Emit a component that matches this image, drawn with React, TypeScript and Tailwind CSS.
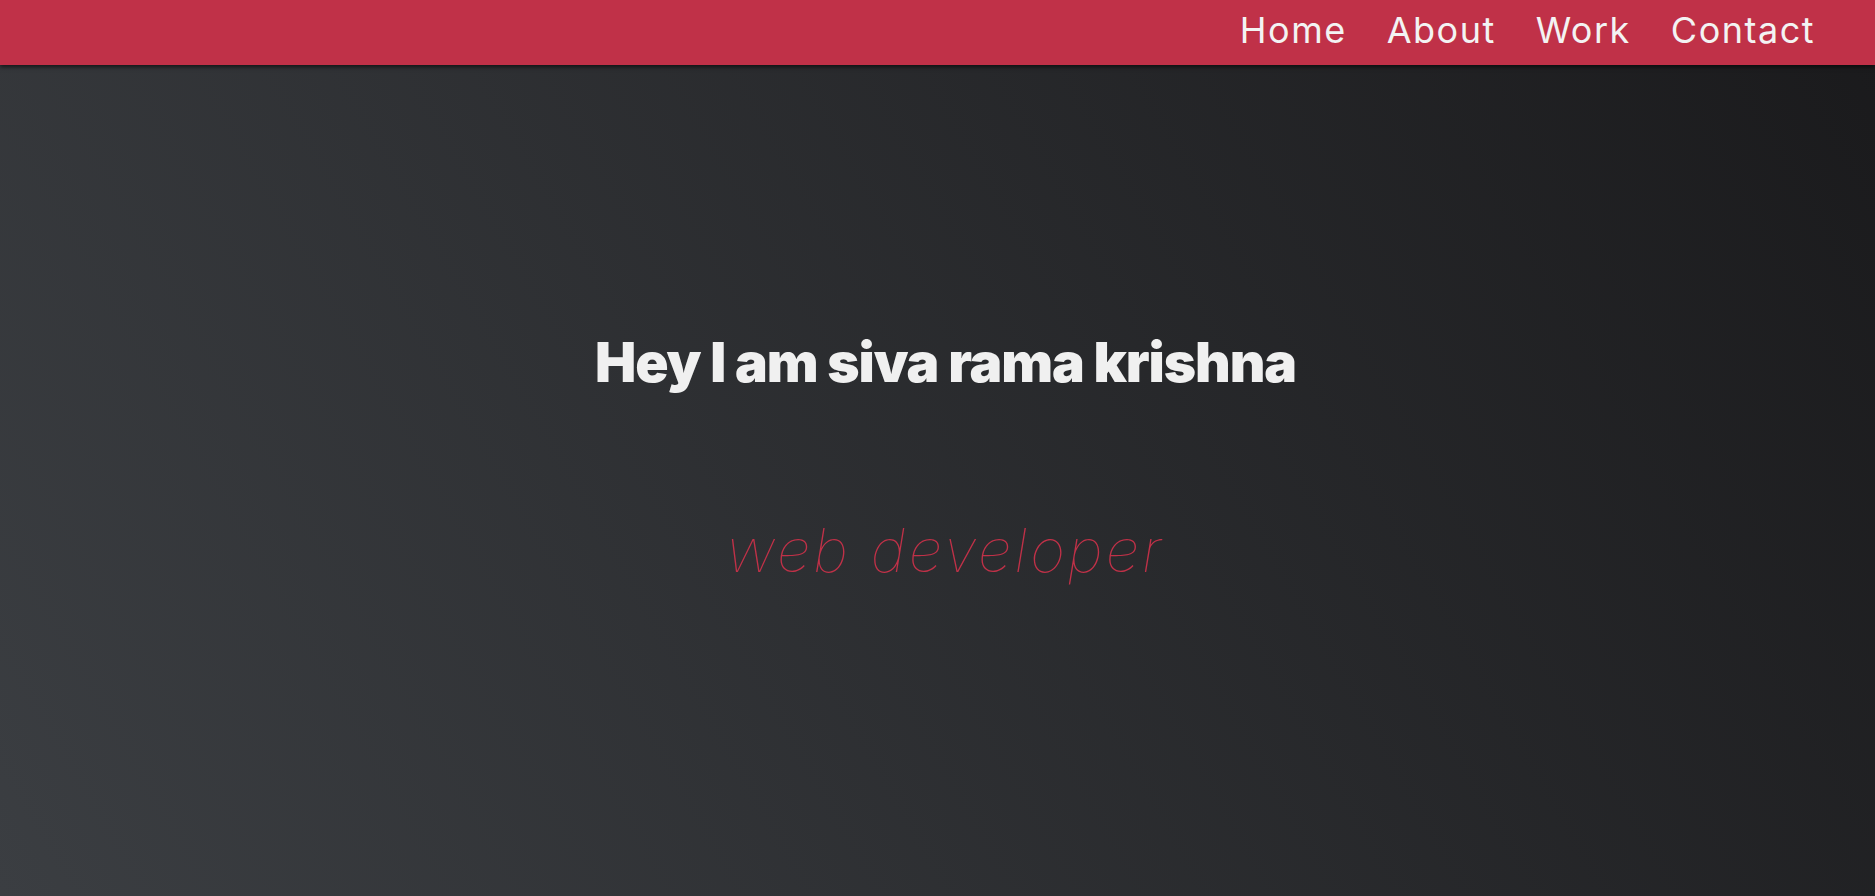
const LINKS = ["Home", "About", "Work", "Contact"];

export default function App() {
  return (
    <div className="flex min-h-screen flex-col bg-[linear-gradient(60deg,#3b3e42,#1a1a1c)] font-['Inter',sans-serif]">
      {/* Top bar */}
      <header className="relative z-10 flex h-[65px] items-center justify-end bg-[#c03148] pb-[6px] pr-[60px] shadow-[0_2px_4px_rgba(0,0,0,0.6)]">
        <nav className="flex items-center gap-[40px]">
          {LINKS.map((label) => (
            <a
              key={label}
              href={`#${label.toLowerCase()}`}
              className="text-[36px] leading-none tracking-[1.5px] text-[#f3f3f3]"
            >
              {label}
            </a>
          ))}
        </nav>
      </header>

      {/* Hero */}
      <section className="flex flex-1 flex-col items-center pl-[16px] pt-[270px]">
        <h1 className="text-[55px] font-black leading-none tracking-[-1.1px] text-[#f0f0f0]">
          Hey I am siva rama krishna
        </h1>
        <p className="mt-[130px] text-[60px] font-thin italic leading-none tracking-[3px] text-[#c03148]">
          web developer
        </p>
      </section>
    </div>
  );
}
